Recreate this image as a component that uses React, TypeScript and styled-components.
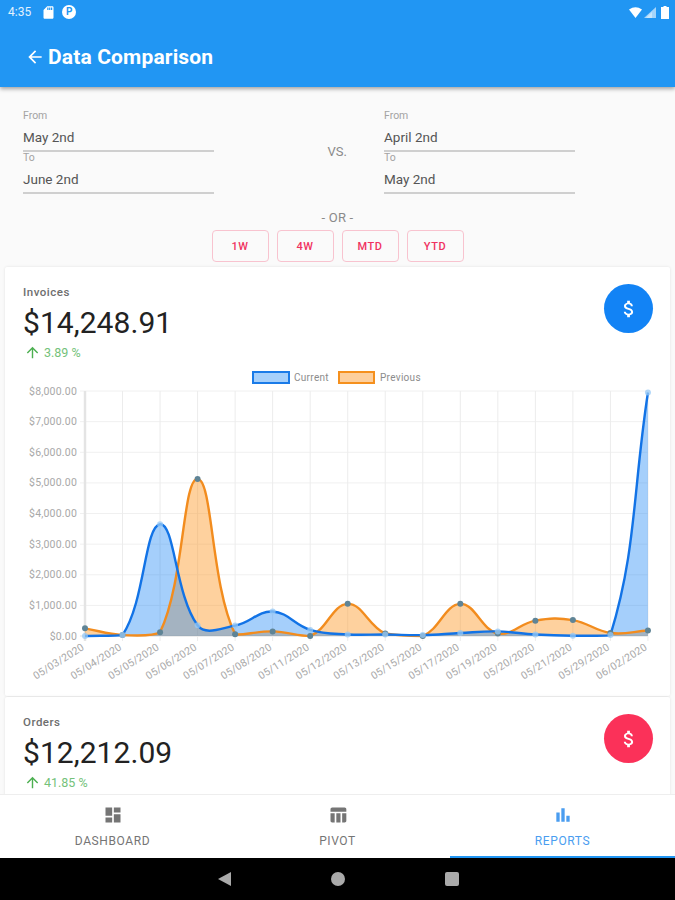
import React from 'react'
import styled, { createGlobalStyle } from 'styled-components'
import { MdArrowBack, MdArrowUpward, MdAttachMoney, MdBarChart, MdDashboard, MdSdCard, MdTableChart } from 'react-icons/md'

const GlobalStyle = createGlobalStyle`
    html, body {
        margin: 0;
        padding: 0;
        background: #fafafa;
    }
    * {
        box-sizing: border-box;
    }
`

const Screen = styled.div`
    width: 675px;
    height: 900px;
    display: flex;
    flex-direction: column;
    overflow: hidden;
    font-family: Roboto, "Liberation Sans", sans-serif;
    background: #fafafa;
`

const Header = styled.header`
    height: 87px;
    flex: none;
    background: #2196f3;
    color: #fff;
    box-shadow: 0 2px 4px rgba(0, 0, 0, 0.35);
    position: relative;
    z-index: 2;
`

const StatusBar = styled.div`
    height: 24px;
    padding: 0 8px;
    display: flex;
    align-items: center;
    font-size: 12px;
    color: #e3f2fd;
`

const StatusRight = styled.div`
    margin-left: auto;
    margin-right: -2px;
    display: flex;
    align-items: center;
`

const SdSlot = styled.span`
    display: flex;
    margin-left: 10px;
    margin-right: 6px;
`

const RoundBadge = styled.span`
    width: 14px;
    height: 14px;
    border-radius: 50%;
    background: #fff;
    color: #2196f3;
    font-size: 10px;
    font-weight: 700;
    line-height: 14px;
    text-align: center;
`

const TitleRow = styled.div`
    height: 63px;
    padding: 3px 0 0 25px;
    display: flex;
    align-items: center;
    gap: 3px;
`

const Title = styled.h1`
    margin: 0;
    font-size: 21px;
    font-weight: 700;
    letter-spacing: 0.15px;
`

const Content = styled.main`
    flex: 1;
    min-height: 0;
    overflow: hidden;
`

const Filters = styled.section`
    height: 180px;
    padding-top: 22px;
`

const DateRow = styled.div`
    display: grid;
    grid-template-columns: 191px 170px 191px;
    padding-left: 23px;
`

const DateColumn = styled.div`
    display: flex;
    flex-direction: column;
`

const Field = styled.div`
    padding-bottom: 3px;
    border-bottom: 2px solid #cfcfcf;
    & + & {
        margin-top: -1px;
    }
`

const FieldLabel = styled.div`
    font-size: 10.5px;
    line-height: 14px;
    color: #a3a3a3;
`

const FieldValue = styled.div`
    margin-top: 4px;
    font-size: 13.5px;
    line-height: 20px;
    color: #555;
`

const Versus = styled.div`
    align-self: center;
    text-align: right;
    padding-right: 37px;
    font-size: 13px;
    color: #8a8a8a;
`

const OrText = styled.div`
    margin-top: 14px;
    text-align: center;
    font-size: 13px;
    letter-spacing: 0.2px;
    line-height: 20px;
    color: #8a8a8a;
`

const RangeRow = styled.div`
    margin-top: 2px;
    display: flex;
    justify-content: center;
    gap: 8px;
`

const RangeButton = styled.button`
    width: 57px;
    height: 32px;
    padding: 0;
    background: transparent;
    border: 1px solid #f8c3cf;
    border-radius: 4px;
    color: #f0325f;
    font-family: inherit;
    font-size: 11px;
    font-weight: 500;
    letter-spacing: 0.6px;
`

const Card = styled.section<{ $height: number }>`
    height: ${(p) => p.$height}px;
    margin: 0 5px 1px;
    background: #fff;
    box-shadow: 0 0 3px rgba(0, 0, 0, 0.1);
    border-radius: 2px;
`

const CardHead = styled.div`
    display: flex;
    justify-content: space-between;
    padding: 17px 17px 0 18px;
`

const CardTitle = styled.div`
    margin-top: 1px;
    font-size: 11.5px;
    font-weight: 500;
    line-height: 14px;
    letter-spacing: 0.5px;
    color: #6e6e6e;
`

const Amount = styled.div`
    margin-top: 6px;
    font-size: 30px;
    line-height: 36px;
    color: #222;
    letter-spacing: 0.05px;
`

const Trend = styled.div`
    margin-top: 2px;
    height: 18px;
    display: flex;
    align-items: center;
    gap: 3px;
    padding-left: 1px;
    font-size: 12.5px;
    color: #74c27a;
    svg {
        color: #4caf50;
    }
`

const IconCircle = styled.div<{ $color: string }>`
    width: 49px;
    height: 49px;
    border-radius: 50%;
    background: ${(p) => p.$color};
    color: #fff;
    display: flex;
    align-items: center;
    justify-content: center;
`

const ChartSvg = styled.svg`
    display: block;
    margin-top: 4px;
`

const AxisText = styled.text`
    font-family: Roboto, "Liberation Sans", sans-serif;
    font-size: 10.5px;
    letter-spacing: 0.2px;
    fill: #a8a8a8;
`

const LegendText = styled.text`
    font-family: Roboto, "Liberation Sans", sans-serif;
    font-size: 10px;
    letter-spacing: 0.3px;
    fill: #8c8c8c;
`

const BottomNav = styled.nav`
    height: 64px;
    flex: none;
    display: grid;
    grid-template-columns: repeat(3, 1fr);
    background: #fff;
    border-top: 1px solid #eee;
    position: relative;
    z-index: 2;
`

const NavTab = styled.div<{ $active?: boolean }>`
    display: flex;
    flex-direction: column;
    align-items: center;
    padding-top: 10px;
    gap: 9px;
    font-size: 12px;
    letter-spacing: 0.6px;
    line-height: 14px;
    color: ${(p) => (p.$active ? '#4a9df0' : '#757575')};
    border-bottom: 2px solid ${(p) => (p.$active ? '#2196f3' : 'transparent')};
`

const SystemNav = styled.div`
    height: 42px;
    flex: none;
    background: #000;
    display: flex;
    align-items: center;
    padding-left: 218px;
    gap: 100px;
`

const BackKey = styled.span`
    width: 0;
    height: 0;
    border-style: solid;
    border-width: 7px 13px 7px 0;
    border-color: transparent #aaa transparent transparent;
`

const HomeKey = styled.span`
    width: 14px;
    height: 14px;
    border-radius: 50%;
    background: #aaa;
`

const RecentKey = styled.span`
    width: 14px;
    height: 14px;
    border-radius: 2px;
    background: #aaa;
`

const labels = ['05/03/2020', '05/04/2020', '05/05/2020', '05/06/2020', '05/07/2020', '05/08/2020', '05/11/2020', '05/12/2020',
    '05/13/2020', '05/15/2020', '05/17/2020', '05/19/2020', '05/20/2020', '05/21/2020', '05/29/2020', '06/02/2020']
const current = [0, 30, 3650, 350, 340, 800, 200, 50, 50, 30, 100, 150, 50, 10, 30, 7950]
const previous = [250, 30, 120, 5130, 60, 150, 0, 1050, 80, 0, 1050, 80, 500, 520, 100, 180]

const X0 = 85
const XSTEP = 37.53
const Y0 = 636
const YK = 245 / 8000

type Pt = { x: number; y: number }

const toPoints = (data: number[]): Pt[] => data.map((v, i) => ({ x: X0 + i * XSTEP, y: Y0 - v * YK }))

const capY = (y: number) => Math.min(Y0, Math.max(391, y))

// bezier spline with control points kept inside the plot, tension 0.4
const splinePath = (data: number[]) => {
    const pts = toPoints(data)
    const t = 0.4
    const ctrl = pts.map((cur, i) => {
        const prev = pts[Math.max(i - 1, 0)]
        const next = pts[Math.min(i + 1, pts.length - 1)]
        const d01 = Math.hypot(cur.x - prev.x, cur.y - prev.y)
        const d12 = Math.hypot(next.x - cur.x, next.y - cur.y)
        const total = d01 + d12 || 1
        const fa = (t * d01) / total
        const fb = (t * d12) / total
        return {
            inX: cur.x - fa * (next.x - prev.x),
            inY: capY(cur.y - fa * (next.y - prev.y)),
            outX: cur.x + fb * (next.x - prev.x),
            outY: capY(cur.y + fb * (next.y - prev.y)),
        }
    })
    let d = `M${pts[0].x} ${pts[0].y}`
    for (let i = 1; i < pts.length; i++) {
        d += ` C${ctrl[i - 1].outX} ${ctrl[i - 1].outY} ${ctrl[i].inX} ${ctrl[i].inY} ${pts[i].x} ${pts[i].y}`
    }
    return d
}

const Area: React.FC<{ data: number[]; fill: string }> = ({ data, fill }) => {
    const lastX = X0 + (data.length - 1) * XSTEP
    return <path d={`${splinePath(data)} L${lastX} ${Y0} L${X0} ${Y0} Z`} fill={fill} />
}

const Line: React.FC<{ data: number[]; stroke: string }> = ({ data, stroke }) => (
    <path d={splinePath(data)} fill="none" stroke={stroke} strokeWidth={2.4} />
)

const Dots: React.FC<{ data: number[]; color: string }> = ({ data, color }) => (
    <>
        {toPoints(data).map((p, i) => (
            <circle key={i} cx={p.x} cy={p.y} r={3} fill={color} />
        ))}
    </>
)

const ComparisonChart: React.FC = () => (
    <ChartSvg width={665} height={330} viewBox="5 365 665 330">
        <rect x={253} y={372} width={36} height={11} fill="#a6d0fb" stroke="#1a7be8" strokeWidth={2} />
        <LegendText x={294} y={381}>Current</LegendText>
        <rect x={339} y={372} width={35} height={11} fill="#fdcf9d" stroke="#f5901e" strokeWidth={2} />
        <LegendText x={380} y={381}>Previous</LegendText>

        {[0, 1, 2, 3, 4, 5, 6, 7, 8].map((k) => {
            const y = Y0 - k * 30.625
            return (
                <g key={k}>
                    <line x1={80} x2={648} y1={y} y2={y} stroke={k === 0 ? '#dcdcdc' : '#f0f0f0'} />
                    <AxisText x={77} y={y + 3.5} textAnchor="end">
                        {`$${k === 0 ? '0' : k + ',000'}.00`}
                    </AxisText>
                </g>
            )
        })}
        {labels.map((l, i) => {
            const x = X0 + i * XSTEP
            return (
                <g key={l}>
                    <line x1={x} x2={x} y1={391} y2={641} stroke={i === 0 ? '#e4e4e4' : '#ececec'} strokeWidth={i === 0 ? 2.5 : 1} />
                    <AxisText x={x} y={649} textAnchor="end" transform={`rotate(-32 ${x} 649)`}>
                        {l}
                    </AxisText>
                </g>
            )
        })}

        <Area data={previous} fill="rgba(252, 152, 40, 0.45)" />
        <Area data={current} fill="rgba(30, 136, 245, 0.4)" />
        <Line data={previous} stroke="#f28c1e" />
        <Line data={current} stroke="#1273e6" />
        <Dots data={previous} color="#5f8496" />
        <Dots data={current} color="rgba(150, 200, 245, 0.75)" />
    </ChartSvg>
)

const WifiIcon = () => (
    <svg width="13" height="11" viewBox="0 0 13 11">
        <path d="M0 2.5 Q6.5 -1.8 13 2.5 L6.5 11 Z" fill="#fff" />
    </svg>
)

const SignalIcon = () => (
    <svg width="12" height="11" viewBox="0 0 12 11" style={{ marginLeft: 2 }}>
        <path d="M12 0 V11 H0 Z" fill="#fff" fillOpacity={0.6} />
        <path d="M8 5 V11 H2 Z" fill="#fff" fillOpacity={0.4} />
    </svg>
)

const BatteryIcon = () => (
    <svg width="8" height="13" viewBox="0 0 8 13" style={{ marginLeft: 5 }}>
        <path d="M2.5 0 H5.5 V1 H8 V13 H0 V1 H2.5 Z" fill="#fff" />
    </svg>
)

type StatCardProps = {
    title: string
    amount: string
    change: string
    color: string
    height: number
    children?: React.ReactNode
}

const StatCard: React.FC<StatCardProps> = ({ title, amount, change, color, height, children }) => (
    <Card $height={height}>
        <CardHead>
            <div>
                <CardTitle>{title}</CardTitle>
                <Amount>{amount}</Amount>
                <Trend>
                    <MdArrowUpward size={17} />
                    {change}
                </Trend>
            </div>
            <IconCircle $color={color}>
                <MdAttachMoney size={22} />
            </IconCircle>
        </CardHead>
        {children}
    </Card>
)

const DateFields: React.FC<{ from: string; to: string }> = ({ from, to }) => (
    <DateColumn>
        <Field>
            <FieldLabel>From</FieldLabel>
            <FieldValue>{from}</FieldValue>
        </Field>
        <Field>
            <FieldLabel>To</FieldLabel>
            <FieldValue>{to}</FieldValue>
        </Field>
    </DateColumn>
)

export default function App() {
    return (
        <Screen>
            <GlobalStyle />
            <Header>
                <StatusBar>
                    <span>4:35</span>
                    <SdSlot>
                        <MdSdCard size={15} color="#fff" />
                    </SdSlot>
                    <RoundBadge>P</RoundBadge>
                    <StatusRight>
                        <WifiIcon />
                        <SignalIcon />
                        <BatteryIcon />
                    </StatusRight>
                </StatusBar>
                <TitleRow>
                    <MdArrowBack size={20} />
                    <Title>Data Comparison</Title>
                </TitleRow>
            </Header>
            <Content>
                <Filters>
                    <DateRow>
                        <DateFields from="May 2nd" to="June 2nd" />
                        <Versus>VS.</Versus>
                        <DateFields from="April 2nd" to="May 2nd" />
                    </DateRow>
                    <OrText>- OR -</OrText>
                    <RangeRow>
                        {['1W', '4W', 'MTD', 'YTD'].map((r) => (
                            <RangeButton key={r}>{r}</RangeButton>
                        ))}
                    </RangeRow>
                </Filters>
                <StatCard title="Invoices" amount="$14,248.91" change="3.89 %" color="#1283f5" height={429}>
                    <ComparisonChart />
                </StatCard>
                <StatCard title="Orders" amount="$12,212.09" change="41.85 %" color="#fb3159" height={200} />
            </Content>
            <BottomNav>
                <NavTab>
                    <MdDashboard size={20} />
                    DASHBOARD
                </NavTab>
                <NavTab>
                    <MdTableChart size={20} />
                    PIVOT
                </NavTab>
                <NavTab $active>
                    <MdBarChart size={20} />
                    REPORTS
                </NavTab>
            </BottomNav>
            <SystemNav>
                <BackKey />
                <HomeKey />
                <RecentKey />
            </SystemNav>
        </Screen>
    )
}
